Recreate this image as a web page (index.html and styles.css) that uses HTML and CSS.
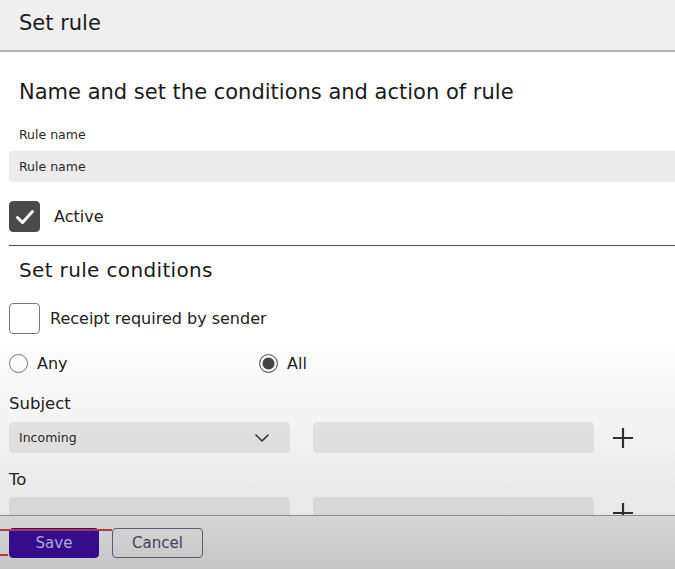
FILE: index.html
```html
<!DOCTYPE html>
<html lang="en">
<head>
<meta charset="utf-8">
<title>Set rule</title>
<link rel="stylesheet" href="styles.css">
</head>
<body>
<div class="dialog">
  <header class="dlg-header">
    <h1 class="dlg-title">Set rule</h1>
  </header>
  <main class="dlg-body">
    <h2 class="section-title">Name and set the conditions and action of rule</h2>
    <div class="field-label">Rule name</div>
    <div class="text-input wide"><span class="placeholder">Rule name</span></div>
    <div class="check-row active-row">
      <span class="checkbox checked">
        <svg viewBox="0 0 24 24" width="24" height="24"><path d="M4.5 12.5 L9.5 17.5 L19.5 6.5" fill="none" stroke="#fff" stroke-width="3" stroke-linecap="round" stroke-linejoin="round"/></svg>
      </span>
      <span class="check-text">Active</span>
    </div>
    <div class="divider"></div>
    <h3 class="sub-title">Set rule conditions</h3>
    <div class="check-row receipt-row">
      <span class="checkbox"></span>
      <span class="check-text receipt">Receipt required by sender</span>
    </div>
    <div class="radio-row">
      <label class="radio-item"><span class="radio"></span><span class="radio-text">Any</span></label>
      <label class="radio-item"><span class="radio on"></span><span class="radio-text">All</span></label>
    </div>
    <div class="group-label">Subject</div>
    <div class="cond-row">
      <div class="text-input select"><span class="value">Incoming</span>
        <svg class="chev" viewBox="0 0 14 8" width="14" height="8"><path d="M1 1 L7 7 L13 1" fill="none" stroke="#333" stroke-width="1.6" stroke-linecap="round" stroke-linejoin="round"/></svg>
      </div>
      <div class="text-input half"></div>
      <svg class="plus" viewBox="0 0 22 22" width="22" height="22"><path d="M11 1 V21 M1 11 H21" stroke="#333" stroke-width="2.2"/></svg>
    </div>
    <div class="group-label to-label">To</div>
    <div class="cond-row to-row">
      <div class="text-input select"></div>
      <div class="text-input half"></div>
      <svg class="plus" viewBox="0 0 22 22" width="22" height="22"><path d="M11 1 V21 M1 11 H21" stroke="#333" stroke-width="2.2"/></svg>
    </div>
  </main>
  <footer class="dlg-footer">
    <button class="btn btn-primary">Save</button>
    <button class="btn btn-secondary">Cancel</button>
  </footer>
</div>
<div class="vignette"></div>
<div class="mark mark-top"></div>
<div class="mark mark-bottom"></div>
</body>
</html>
```
FILE: styles.css
```css
* { box-sizing: border-box; }
html, body {
  margin: 0;
  padding: 0;
  width: 675px;
  height: 569px;
  overflow: hidden;
  background: #fff;
  font-family: "DejaVu Sans", "Open Sans", sans-serif;
  color: #1a1a1a;
}
.dialog {
  width: 700px;
  height: 569px;
  display: flex;
  flex-direction: column;
}
.dlg-header {
  height: 52px;
  flex: none;
  background: #efefef;
  border-bottom: 2px solid #b4b4b4;
  padding-left: 19px;
  display: flex;
  align-items: center;
}
.dlg-title {
  margin: 0;
  font-size: 21px;
  font-weight: 400;
  line-height: 26px;
  margin-top: -5px;
}
.dlg-body {
  flex: 1;
  overflow: hidden;
  padding-left: 9px;
  display: flex;
  flex-direction: column;
  min-height: 0;
}
.section-title {
  margin: 27px 0 0 10px;
  font-size: 21px;
  font-weight: 400;
  line-height: 26px;
}
.field-label {
  margin: 22px 0 0 10px;
  font-size: 12.5px;
  line-height: 16px;
  color: #2a2a2a;
}
.text-input {
  height: 31px;
  background: #ececec;
  border-radius: 4px;
  display: flex;
  align-items: center;
  padding-left: 10px;
  flex: none;
}
.text-input.wide {
  margin-top: 8px;
  width: 100%;
}
.placeholder, .value {
  font-size: 12.5px;
  color: #2a2a2a;
}
.check-row {
  display: flex;
  align-items: center;
  height: 31px;
  flex: none;
}
.active-row { margin-top: 19px; }
.checkbox {
  width: 31px;
  height: 31px;
  border-radius: 4px;
  border: 1px solid #7a7a7a;
  background: #fff;
  display: flex;
  align-items: center;
  justify-content: center;
  flex: none;
}
.checkbox.checked {
  background: #4a4a4a;
  border-color: #4a4a4a;
}
.check-text {
  margin-left: 14px;
  font-size: 16px;
  color: #222;
}
.check-text.receipt { margin-left: 10px; }
.divider {
  margin-top: 13px;
  height: 1px;
  background: #4e4e4e;
  flex: none;
}
.sub-title {
  margin: 12px 0 0 10px;
  font-size: 20px;
  font-weight: 400;
  line-height: 24px;
  letter-spacing: 0.35px;
}
.receipt-row { margin-top: 21px; }
.radio-row {
  margin-top: 19px;
  height: 20px;
  display: grid;
  grid-template-columns: 250px 250px;
  flex: none;
}
.radio-item {
  display: flex;
  align-items: center;
}
.radio {
  width: 19px;
  height: 19px;
  border-radius: 50%;
  border: 1px solid #777;
  background: #fff;
  flex: none;
}
.radio.on {
  background: #444;
  box-shadow: inset 0 0 0 2.5px #fff;
  border-color: #666;
}
.radio-text {
  margin-left: 9px;
  font-size: 16px;
  color: #222;
}
.group-label {
  margin-top: 21px;
  font-size: 16.5px;
  line-height: 20px;
  color: #222;
}
.to-label { margin-top: 17px; }
.cond-row {
  margin-top: 8px;
  display: flex;
  align-items: center;
  flex: none;
}
.to-row { margin-top: 7px; }
.text-input.select {
  width: 281px;
  justify-content: space-between;
  padding-right: 21px;
}
.text-input.half {
  width: 281px;
  margin-left: 23px;
}
.plus {
  margin-left: 18px;
}
.dlg-footer {
  height: 54px;
  flex: none;
  background: #ececec;
  border-top: 1px solid #9c9c9c;
  padding: 12px 0 0 9px;
  display: flex;
  align-items: flex-start;
  gap: 13px;
}
.btn {
  height: 30px;
  border-radius: 4px;
  font-family: inherit;
  font-size: 15px;
  padding: 0;
}
.btn-primary {
  width: 90px;
  background: #3b0f9f;
  border: 1px solid #3b0f9f;
  color: #cdbff2;
}
.btn-secondary {
  width: 91px;
  background: transparent;
  border: 1px solid #6a6a82;
  color: #4a4a68;
}
.vignette {
  position: absolute;
  left: 0;
  top: 0;
  width: 675px;
  height: 569px;
  pointer-events: none;
  background: linear-gradient(to bottom, rgba(0,0,0,0) 0%, rgba(0,0,0,0) 58%, rgba(0,0,0,0.09) 90%, rgba(0,0,0,0.16) 100%);
}
.mark {
  position: absolute;
  height: 2px;
  background: #b23a3a;
}
.mark-top {
  left: 0;
  top: 529px;
  width: 112px;
}
.mark-bottom {
  left: 0;
  top: 554px;
  width: 8px;
}
```
